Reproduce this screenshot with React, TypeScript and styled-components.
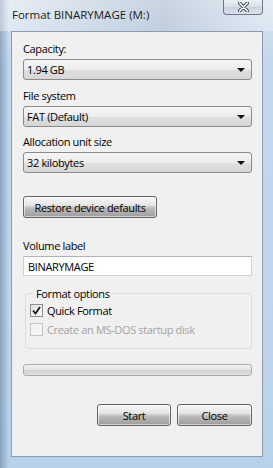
import React from "react";
import styled, { createGlobalStyle } from "styled-components";

const GlobalStyle = createGlobalStyle`
  html, body {
    margin: 0;
    padding: 0;
    width: 273px;
    height: 468px;
    overflow: hidden;
  }
  body {
    font-family: "Open Sans", "Noto Sans", "Liberation Sans", sans-serif;
    font-size: 11px;
    letter-spacing: -0.35px;
    color: #000;
  }
`;

const Window = styled.div`
  width: 273px;
  height: 468px;
  display: flex;
  flex-direction: column;
  box-sizing: border-box;
  background:
    linear-gradient(to right, rgba(40, 70, 110, 0.35) 0px, rgba(40, 70, 110, 0) 9px),
    linear-gradient(to bottom, #dbe6f1 0px, #cfdeee 30px, #c3d7ec 60px, #bfd5ec 300px, #b8d1ea 468px);
`;

const TitleBar = styled.div`
  height: 31px;
  display: flex;
  align-items: flex-start;
  justify-content: space-between;
  padding: 0 10px 0 12px;
  box-sizing: border-box;
  background: linear-gradient(to right, rgba(255, 255, 255, 0.35), rgba(150, 160, 175, 0.25) 60%, rgba(255, 255, 255, 0.3));
`;

const Title = styled.span`
  margin-top: 7px;
  line-height: 16px;
  font-size: 11.5px;
  letter-spacing: 0;
  color: #1a1a1a;
`;

const CloseBtn = styled.div`
  width: 40px;
  height: 15px;
  box-sizing: border-box;
  border: 1px solid #6b7789;
  border-top: none;
  border-radius: 0 0 4px 4px;
  background: linear-gradient(#eef2f7, #d6dee8 50%, #c8d2de 51%, #dbe3ec);
  display: flex;
  align-items: center;
  justify-content: center;
`;

const Client = styled.div`
  flex: 1;
  margin: 0 10px 11px 11px;
  border: 1px solid #8d9cad;
  background: #f0f0f0;
  padding: 9px 10px 0 11px;
  display: flex;
  flex-direction: column;
`;

const Label = styled.div<{ $top: number }>`
  margin-top: ${(p) => p.$top}px;
  height: 15px;
  line-height: 15px;
`;

const Combo = styled.div`
  margin-top: 3px;
  height: 21px;
  width: 229px;
  box-sizing: border-box;
  border: 1px solid #8a8a8a;
  border-radius: 3px;
  background: linear-gradient(#f5f5f5, #ececec 50%, #e0e0e0 51%, #d6d6d6);
  display: flex;
  align-items: center;
  justify-content: space-between;
  padding: 0 6px 0 3px;
`;

const Arrow = styled.span`
  width: 0;
  height: 0;
  border-left: 4px solid transparent;
  border-right: 4px solid transparent;
  border-top: 4px solid #111;
`;

const Button = styled.div<{ $width: number }>`
  width: ${(p) => p.$width}px;
  height: 22px;
  box-sizing: border-box;
  border: 1px solid #656565;
  border-radius: 3px;
  background: linear-gradient(#f6f6f6, #e6e6e6 40%, #bdbdbd 55%, #9c9c9c);
  box-shadow: inset 0 0 0 1px rgba(255, 255, 255, 0.55);
  display: flex;
  align-items: center;
  justify-content: center;
`;

const RestoreRow = styled.div`
  margin-top: 23px;
  display: flex;
`;

const TextInput = styled.div`
  margin-top: 3px;
  height: 20px;
  width: 229px;
  box-sizing: border-box;
  border: 1px solid #c9d1d9;
  border-top-color: #abb3bc;
  background: #fff;
  display: flex;
  align-items: center;
  padding-left: 4px;
`;

const Group = styled.fieldset`
  margin: 10px 0 0 2px;
  width: 227px;
  height: 63px;
  box-sizing: border-box;
  border: 1px solid #d5dde4;
  border-radius: 3px;
  padding: 0 0 0 4px;
  display: flex;
  flex-direction: column;
`;

const Legend = styled.legend`
  margin-left: 3px;
  padding: 0 3px;
  height: 15px;
  line-height: 15px;
`;

const CheckRow = styled.div<{ $disabled?: boolean }>`
  height: 19px;
  display: flex;
  align-items: center;
  gap: 4px;
  color: ${(p) => (p.$disabled ? "#a3a3a3" : "#000")};
`;

const Box = styled.span<{ $disabled?: boolean }>`
  width: 13px;
  height: 13px;
  box-sizing: border-box;
  border: 1px solid ${(p) => (p.$disabled ? "#c4c4c4" : "#8e8f8f")};
  background: ${(p) =>
    p.$disabled ? "#f4f4f4" : "linear-gradient(135deg, #e0e0e0, #fbfbfb)"};
  display: flex;
  align-items: center;
  justify-content: center;
`;

const Progress = styled.div`
  margin-top: 15px;
  height: 12px;
  width: 229px;
  box-sizing: border-box;
  border: 1px solid #acacac;
  border-radius: 3px;
  background: linear-gradient(#f3f3f3, #e4e4e4 45%, #d5d5d5 55%, #dedede);
`;

const Footer = styled.div`
  margin-top: 28px;
  width: 229px;
  display: flex;
  justify-content: flex-end;
  gap: 6px;
`;

const App: React.FC = () => {
  return (
    <>
      <GlobalStyle />
      <Window>
        <TitleBar>
          <Title>Format BINARYMAGE (M:)</Title>
          <CloseBtn>
            <svg width="11" height="10" viewBox="0 0 11 10">
              <path
                d="M1.5 1 L9.5 9 M9.5 1 L1.5 9"
                stroke="#3c4450"
                strokeWidth="3.4"
                strokeLinecap="round"
              />
              <path
                d="M1.5 1 L9.5 9 M9.5 1 L1.5 9"
                stroke="#ffffff"
                strokeWidth="1.6"
                strokeLinecap="round"
              />
            </svg>
          </CloseBtn>
        </TitleBar>
        <Client>
          <Label $top={0}>Capacity:</Label>
          <Combo>
            <span>1.94 GB</span>
            <Arrow />
          </Combo>
          <Label $top={8}>File system</Label>
          <Combo>
            <span>FAT (Default)</span>
            <Arrow />
          </Combo>
          <Label $top={7}>Allocation unit size</Label>
          <Combo>
            <span>32 kilobytes</span>
            <Arrow />
          </Combo>
          <RestoreRow>
            <Button $width={134}>Restore device defaults</Button>
          </RestoreRow>
          <Label $top={20}>Volume label</Label>
          <TextInput>BINARYMAGE</TextInput>
          <Group>
            <Legend>Format options</Legend>
            <CheckRow>
              <Box>
                <svg width="9" height="9" viewBox="0 0 9 9">
                  <path d="M1 4.5 L3.5 7.5 L8 1" fill="none" stroke="#1b1b1b" strokeWidth="1.8" />
                </svg>
              </Box>
              <span>Quick Format</span>
            </CheckRow>
            <CheckRow $disabled>
              <Box $disabled />
              <span>Create an MS-DOS startup disk</span>
            </CheckRow>
          </Group>
          <Progress />
          <Footer>
            <Button $width={74}>Start</Button>
            <Button $width={75}>Close</Button>
          </Footer>
        </Client>
      </Window>
    </>
  );
};

export default App;
